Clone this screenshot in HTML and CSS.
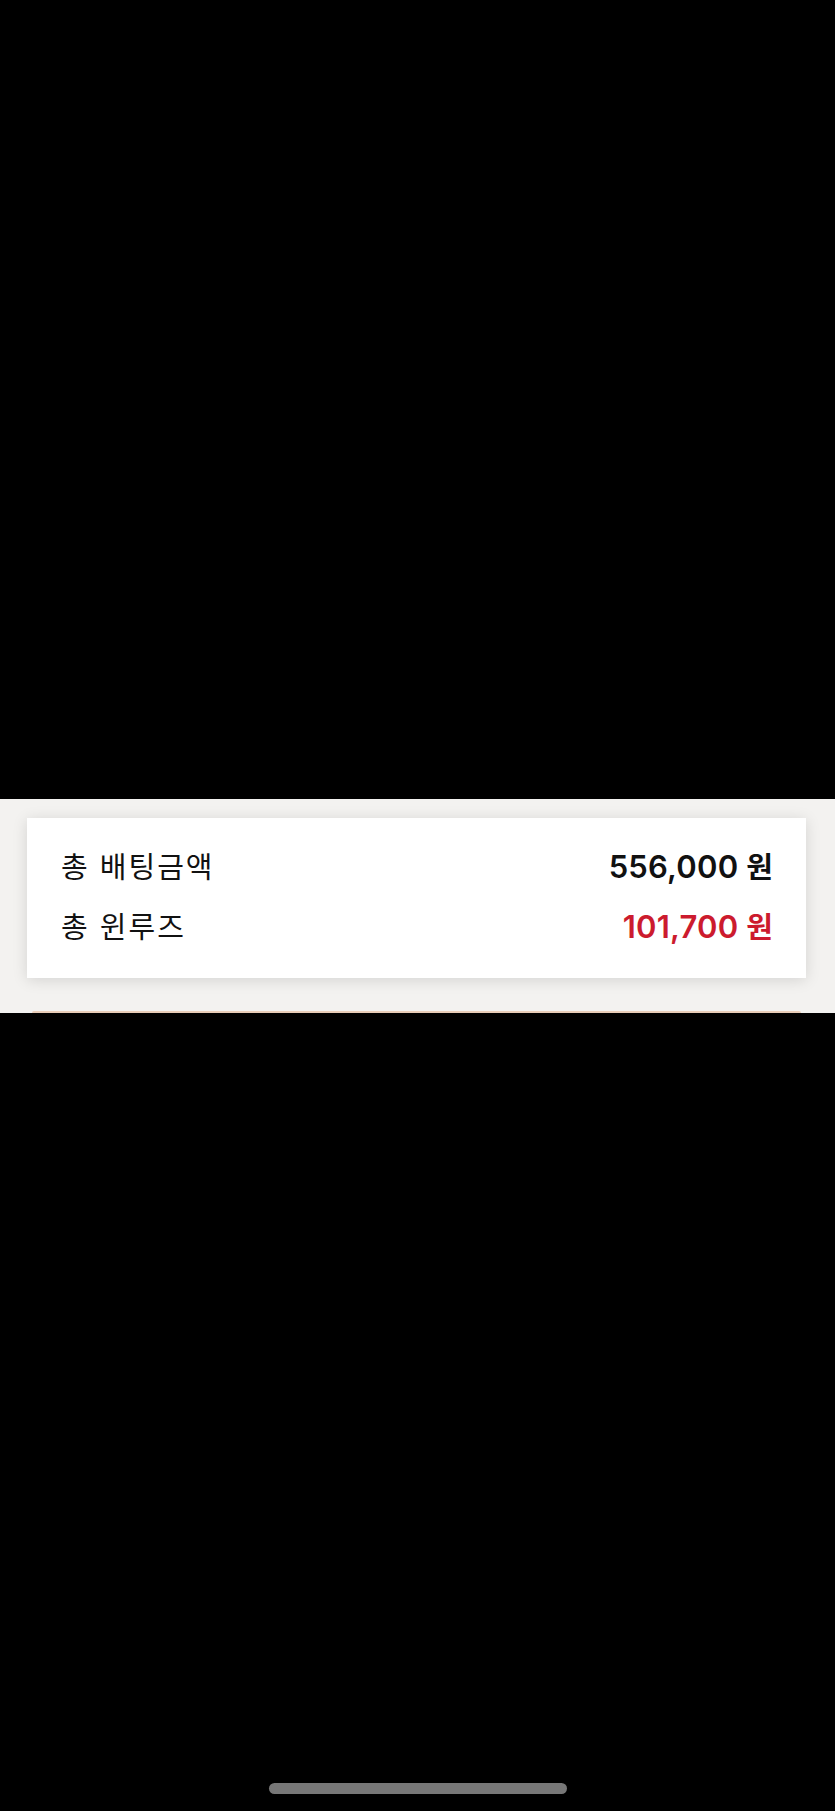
FILE: index.html
```html
<!doctype html>
<html lang="ko">

<head>
    <meta charset="utf-8">
    <title>배팅 요약</title>
    <link rel="stylesheet" href="styles.css">
</head>

<body>
    <div class="dark top"></div>
    <div class="band">
        <div class="card">
            <div class="row">
                <span class="label">총 배팅금액</span>
                <span class="amount">556,000 <span class="won">원</span></span>
            </div>
            <div class="row">
                <span class="label">총 윈루즈</span>
                <span class="amount red">101,700 <span class="won">원</span></span>
            </div>
        </div>
        <div class="next"></div>
    </div>
    <div class="dark bottom">
        <div class="home"></div>
    </div>
</body>

</html>
```

FILE: styles.css
```css
body {
    margin: 0;
    background: #000000;
    font-family: "Noto Sans CJK KR", "Noto Sans", sans-serif;
    color: #111111;
}

.dark {
    background: #000000;
}

.top {
    height: 799px;
}

.band {
    height: 214px;
    background: #f3f2f0;
    padding: 19px 29px 0 27px;
    box-sizing: border-box;
    display: flex;
    flex-direction: column;
}

.card {
    background: #ffffff;
    height: 160px;
    box-sizing: border-box;
    padding: 29px 33px 0 34px;
    display: flex;
    flex-direction: column;
    gap: 24px;
    box-shadow: 0 2px 14px rgba(0, 0, 0, 0.13);
}

.row {
    display: flex;
    justify-content: space-between;
    align-items: center;
    height: 36px;
}

.label {
    font-size: 29px;
    font-weight: 400;
    letter-spacing: 2px;
}

.amount {
    font-family: Inter, "Noto Sans CJK KR", sans-serif;
    font-size: 31px;
    font-weight: 600;
    letter-spacing: 0.2px;
}

.won {
    font-family: "Noto Sans CJK KR", sans-serif;
    font-weight: 700;
    font-size: 29px;
    letter-spacing: 0;
}

.red {
    color: #cc1b2e;
}

.next {
    margin: auto 5px 0 5px;
    height: 2px;
    background: #e9cdb8;
    border-radius: 2px 2px 0 0;
}

.bottom {
    height: 798px;
    display: flex;
    justify-content: center;
}

.home {
    width: 298px;
    height: 11px;
    margin-top: 770px;
    border-radius: 6px;
    background: #777777;
}
```
